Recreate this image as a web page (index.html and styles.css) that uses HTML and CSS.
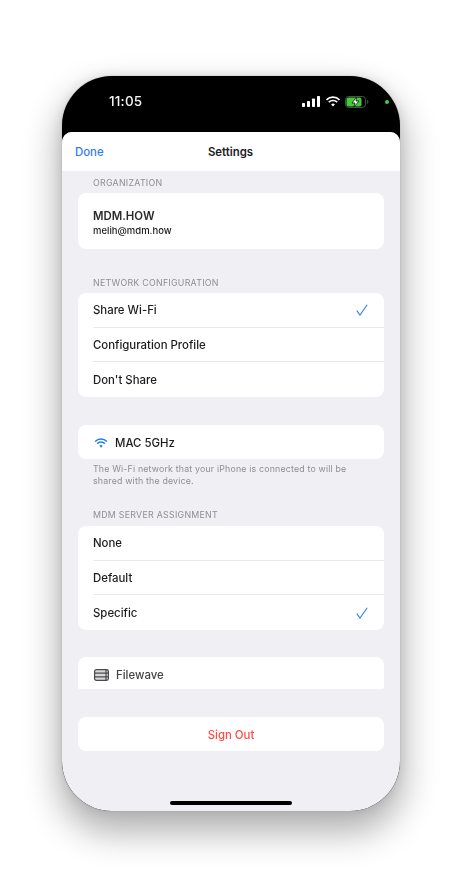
FILE: index.html
```html
<!DOCTYPE html>
<html lang="en">
<head>
<meta charset="utf-8">
<title>Settings</title>
<link rel="stylesheet" href="styles.css">
</head>
<body>
<div class="phone">
  <div class="status">
    <span class="time">11:05</span>
    <div class="status-icons">
      <svg class="sig" width="18" height="11" viewBox="0 0 18 11"><rect x="0" y="7" width="3" height="4" rx=".7"/><rect x="5" y="5" width="3" height="6" rx=".7"/><rect x="10" y="2.500" width="3" height="8.500" rx=".7"/><rect x="15" y="0" width="3" height="11" rx=".7"/></svg>
      <svg class="wifi-s" width="16" height="11" viewBox="0 0 15 11" fill="none" stroke="#fff" stroke-width="1.700"><path d="M1 3.800a9.400 9.400 0 0 1 13 0"/><path d="M3.300 6.200a6 6 0 0 1 8.400 0"/><path d="M7.500 10.600 5.600 8.500a2.800 2.800 0 0 1 3.800 0z" fill="#fff" stroke="none"/></svg>
      <svg class="batt" width="24" height="12" viewBox="0 0 24 12"><rect x=".5" y=".5" width="20" height="11" rx="3" fill="none" stroke="#3f5a3a"/><rect x="1.500" y="1.500" width="15" height="9" rx="2" fill="#46c83f"/><path d="M22 4v4c.9-.3 1.400-1 1.400-2S22.900 4.300 22 4z" fill="#444"/><path d="M11.500 1 7 7h3l-1 4 5-6h-3z" fill="#fff" stroke="#000" stroke-width=".7"/></svg>
      <span class="dot"></span>
    </div>
  </div>
  <div class="sheet">
    <header class="nav">
      <span class="done">Done</span>
      <span class="title">Settings</span>
    </header>
    <main class="content">
      <div class="label label-first">ORGANIZATION</div>
      <section class="card org">
        <div class="org-name">MDM.HOW</div>
        <div class="org-mail">melih@mdm.how</div>
      </section>
      <div class="label label-net">NETWORK CONFIGURATION</div>
      <section class="card">
        <div class="row"><span>Share Wi-Fi</span><svg class="check" width="12" height="12" viewBox="0 0 12 12" fill="none" stroke="#2f7cf6" stroke-width="1.100"><path d="M.8 6.600 4 11 11.200 .8"/></svg></div>
        <div class="row"><span>Configuration Profile</span></div>
        <div class="row"><span>Don't Share</span></div>
      </section>
      <section class="card single wifi-card">
        <svg width="14" height="10" viewBox="0 0 15 11" fill="none" stroke="#1f7bf6" stroke-width="1.700"><path d="M1 3.800a9.400 9.400 0 0 1 13 0"/><path d="M3.300 6.200a6 6 0 0 1 8.400 0"/><path d="M7.500 10.600 5.600 8.500a2.800 2.800 0 0 1 3.800 0z" fill="#1f7bf6" stroke="none"/></svg>
        <span>MAC 5GHz</span>
      </section>
      <p class="note">The Wi-Fi network that your iPhone is connected to will be shared with the device.</p>
      <div class="label label-mdm">MDM SERVER ASSIGNMENT</div>
      <section class="card">
        <div class="row"><span>None</span></div>
        <div class="row"><span>Default</span></div>
        <div class="row"><span>Specific</span><svg class="check" width="12" height="12" viewBox="0 0 12 12" fill="none" stroke="#2f7cf6" stroke-width="1.100"><path d="M.8 6.600 4 11 11.200 .8"/></svg></div>
      </section>
      <section class="card single filewave">
        <svg width="15" height="12" viewBox="0 0 15 12" fill="none" stroke="#4a4a4c" stroke-width="1.200"><rect x=".6" y=".6" width="13.800" height="10.800" rx="1.800" fill="#d8d8da"/><path d="M.6 4.200h13.800M.6 7.800h13.800M12 .6v10.800"/></svg>
        <span>Filewave</span>
      </section>
      <section class="card single signout">Sign Out</section>
    </main>
    <div class="home"></div>
  </div>
</div>
</body>
</html>
```

FILE: styles.css
```css
* { box-sizing: border-box; }
html, body { margin: 0; height: 100%; }
body {
  background: #fff;
  font-family: Inter, "Liberation Sans", sans-serif;
  overflow: hidden;
  padding: 76px 0 0 62px;
}
.phone {
  width: 338px;
  height: 735px;
  border-radius: 50px;
  background: #000;
  overflow: hidden;
  display: flex;
  flex-direction: column;
  box-shadow: 0 0 1px 0 #777, 0 18px 34px 4px rgba(0, 0, 0, .3), 0 0 14px rgba(0, 0, 0, .1);
  filter: blur(.3px);
}
.status {
  height: 56px;
  flex: none;
  display: flex;
  justify-content: space-between;
  padding: 17px 11px 0 47px;
  color: #f2f2f2;
}
.time { font-size: 13.500px; font-weight: 500; line-height: 17px; letter-spacing: .2px; }
.status-icons { display: flex; align-items: flex-start; gap: 4px; padding-top: 3px; }
.sig { fill: #fff; margin-right: 1px; }
.batt { margin-right: 12px; }
.dot { width: 4px; height: 4px; border-radius: 50%; background: #35d63a; margin-top: 4px; }
.sheet {
  flex: 1;
  min-height: 0;
  background: #efeff4;
  border-radius: 10px 10px 0 0;
  overflow: hidden;
  display: flex;
  flex-direction: column;
}
.nav {
  height: 39px;
  flex: none;
  background: #fff;
  display: flex;
  align-items: center;
  justify-content: center;
  padding-top: 1px;
  position: relative;
  font-size: 11.400px;
}
.done { position: absolute; left: 13px; color: #2f7cf6; font-weight: 450; }
.title { font-weight: 600; color: #1c1c1e; margin-left: -1px; }
.content { flex: 1; padding: 0 16px; }
.label {
  font-size: 8.800px;
  line-height: 12px;
  letter-spacing: .28px;
  color: #8e8e93;
  padding-left: 15px;
  margin-bottom: 4px;
}
.label-first { margin-top: 6px; }
.label-net { margin-top: 28px; }
.label-mdm { margin-top: 22px; margin-bottom: 5px; }
.card {
  background: #fff;
  border-radius: 8px;
  font-size: 11.400px;
  font-weight: 450;
  color: #1c1c1e;
}
.org { height: 56px; padding: 16px 15px 0; }
.org-name { font-weight: 600; line-height: 15px; color: #2a2a2c; }
.org-mail { font-size: 9.500px; line-height: 13px; }
.row {
  height: 34.500px;
  margin-left: 15px;
  padding: 1px 16px 0 0;
  display: flex;
  align-items: center;
  justify-content: space-between;
  border-bottom: 1px solid #e8e8ec;
}
.row:last-child { border-bottom: 0; }
.single { display: flex; align-items: center; padding-left: 16px; padding-top: 1px; }
.wifi-card { height: 34px; margin-top: 28.500px; gap: 7px; }
.note {
  font-size: 8.800px;
  line-height: 12px;
  letter-spacing: .18px;
  color: #8e8e93;
  margin: 4px 0 0;
  padding: 0 15px;
}
.filewave { height: 32px; margin-top: 27.500px; gap: 7px; border-radius: 8px 8px 2px 2px; padding-top: 4px; font-weight: 500; color: #444; }
.signout { height: 34px; margin-top: 28px; justify-content: center; padding-left: 0; color: #ff4a45; }
.home { width: 122px; height: 4px; border-radius: 2px; background: #000; margin: 0 auto 6px; flex: none; }
```
